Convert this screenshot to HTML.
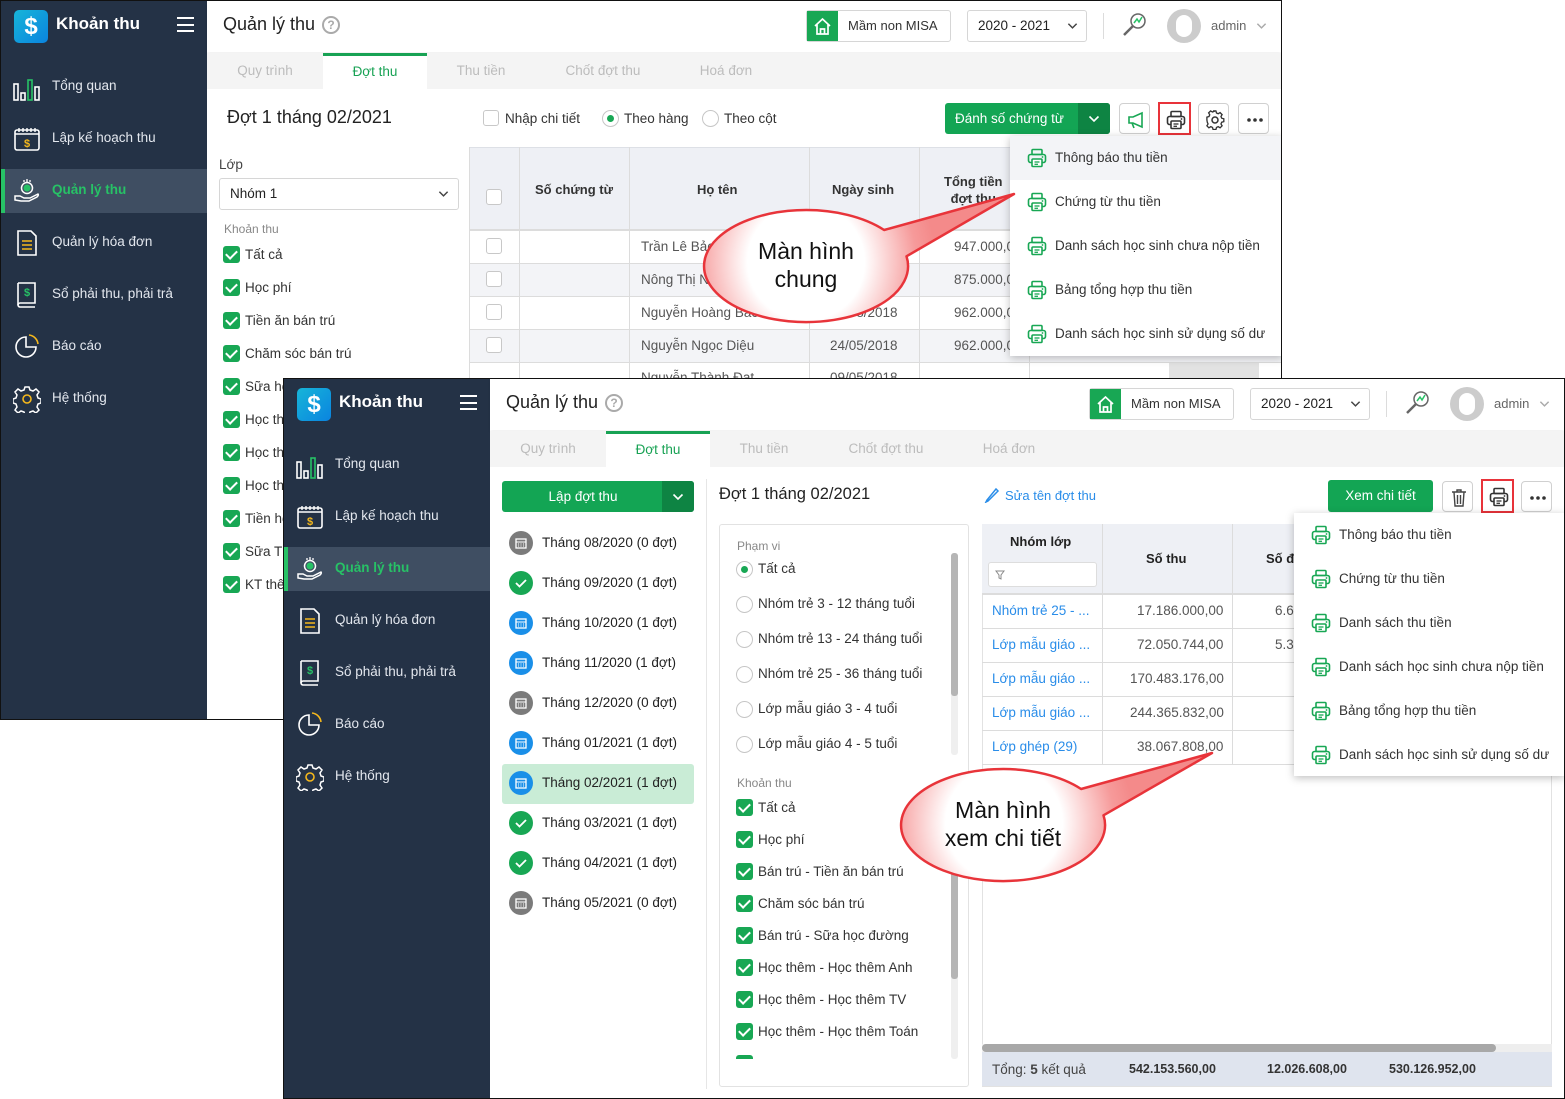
<!DOCTYPE html>
<html><head><meta charset="utf-8">
<style>
*{box-sizing:border-box;margin:0;padding:0}
body{width:1565px;height:1099px;background:#fff;position:relative;overflow:hidden;font-family:"Liberation Sans","Noto Sans CJK SC",sans-serif;font-size:13px;color:#333}
.p{position:absolute;width:1282px;border:1px solid #111;background:#fff;overflow:hidden}
.a{position:absolute;white-space:nowrap}
.sb{position:absolute;left:0;top:0;width:206px;height:100%;background:#243246}
.logo{position:absolute;left:13px;top:9px;width:34px;height:33px;border-radius:5px;background:linear-gradient(135deg,#17b5d8,#0a84e0);color:#fff;font-weight:bold;font-size:24px;text-align:center;line-height:33px}
.brand{position:absolute;left:55px;top:13px;color:#fff;font-weight:bold;font-size:17px}
.hb{position:absolute;left:176px;top:16px;width:17px;height:15px;border-top:2px solid #fff;border-bottom:2px solid #fff}
.hb:after{content:"";position:absolute;left:0;top:4.5px;width:17px;height:2px;background:#fff}
.mi{position:absolute;left:0;width:206px;height:44px;color:#e3e7ee;font-size:13.5px}
.mi span{position:absolute;left:51px;top:13px}
.mi svg{position:absolute;left:12px;top:8px}
.mi.act{background:#3f4e62;border-left:4px solid #27c266}
.mi.act span{color:#27c266;font-weight:bold;left:47px}
.mi.act svg{left:8px}
.hdr{position:absolute;left:206px;top:0;right:0;height:51px;background:#fff;box-shadow:0 1px 3px rgba(0,0,0,.08)}
.tabs{position:absolute;left:206px;top:52px;right:0;height:36px;background:#f4f4f4}
.tab{position:absolute;top:0;height:36px;line-height:36px;color:#bcbcbc;font-size:13.5px;text-align:center}
.tab.on{background:#fff;border-top:3px solid #18a254;color:#18a254;line-height:32px}
.box{position:absolute;border:1px solid #d6d6d6;border-radius:3px;background:#fff}
.cb{position:absolute;width:17px;height:17px;border-radius:3px;background:#18a754}
.cb:after{content:"";position:absolute;left:5px;top:2px;width:5px;height:9px;border:solid #fff;border-width:0 2px 2px 0;transform:rotate(45deg)}
.ecb{position:absolute;width:16px;height:16px;border:1px solid #c8c8c8;border-radius:3px;background:#fff}
.rd{position:absolute;width:17px;height:17px;border:1px solid #c6c6c6;border-radius:50%;background:#fff}
.rd.on:after{content:"";position:absolute;left:4px;top:4px;width:7px;height:7px;border-radius:50%;background:#18a754}
.gbtn{position:absolute;background:#13a554;color:#fff;border-radius:3px;font-size:13.5px;text-align:center}
.ib{position:absolute;width:31px;height:31px;border:1px solid #d0d0d0;border-radius:4px;background:#fff}
.ib svg{position:absolute;left:6px;top:6px}
.red{border:2px solid #e8333a;border-radius:0}
.dd{position:absolute;background:#fff;box-shadow:0 2px 8px rgba(0,0,0,.25)}
.dd .it{position:absolute;left:0;right:0;height:44px;font-size:13.5px;color:#333}
.dd .it svg{position:absolute;left:17px;top:12px}
.dd .it span{position:absolute;left:45px;top:14px}
.t{position:absolute;font-size:13.5px;color:#333;white-space:nowrap}
.cl{position:absolute;background:#dcdcdc}
</style></head><body>
<svg width="0" height="0" style="position:absolute">
<defs>
<symbol id="pr" viewBox="0 0 20 20"><rect x="5" y="1.5" width="10" height="5" rx="1" fill="none" stroke="currentColor" stroke-width="1.6"/><rect x="1.5" y="6.5" width="17" height="8" rx="2" fill="none" stroke="currentColor" stroke-width="1.6"/><rect x="5" y="11" width="10" height="7.5" rx="1" fill="#fff" stroke="currentColor" stroke-width="1.6"/><line x1="7.5" y1="14" x2="12.5" y2="14" stroke="currentColor" stroke-width="1.3"/><line x1="7.5" y1="16.3" x2="11" y2="16.3" stroke="currentColor" stroke-width="1.3"/><circle cx="15.5" cy="9" r="0.9" fill="currentColor"/></symbol>
<symbol id="chev" viewBox="0 0 12 8"><path d="M1.5 1.5 6 6 10.5 1.5" fill="none" stroke="currentColor" stroke-width="1.6"/></symbol>
<symbol id="i1" viewBox="0 0 28 22"><rect x="1" y="5" width="4" height="16" fill="none" stroke="#fff" stroke-width="1.6"/><rect x="8" y="14" width="4" height="7" fill="none" stroke="#fff" stroke-width="1.6"/><rect x="15" y="1" width="4" height="20" fill="none" stroke="#27c266" stroke-width="1.6"/><rect x="22" y="8" width="4" height="13" fill="none" stroke="#fff" stroke-width="1.6"/></symbol>
<symbol id="i2" viewBox="0 0 28 26"><rect x="2" y="4" width="24" height="20" rx="2" fill="none" stroke="#fff" stroke-width="1.6"/><line x1="2" y1="8" x2="26" y2="8" stroke="#fff" stroke-width="1.4"/><path d="M6 2v4M10 2v4M14 2v4M18 2v4M22 2v4" stroke="#fff" stroke-width="1.4"/><text x="14" y="21" font-size="11" text-anchor="middle" fill="#f5b81c" font-family="Liberation Sans" font-weight="bold">$</text></symbol>
<symbol id="i3" viewBox="0 0 28 28"><circle cx="14" cy="11" r="5.5" fill="none" stroke="#fff" stroke-width="1.5"/><circle cx="14" cy="11" r="3.5" fill="#27c266"/><path d="M14 2v3M11 3v2M17 3v2" stroke="#fff" stroke-width="1.3"/><path d="M2 19h5l4 2h6l8-4c1 1 0 2-1 3l-8 4H8l-6-1z" fill="none" stroke="#fff" stroke-width="1.5"/></symbol>
<symbol id="i4" viewBox="0 0 28 28"><path d="M5 2h13l5 5v19H5z" fill="none" stroke="#fff" stroke-width="1.6"/><path d="M9 12h10M9 16h10M9 20h10" stroke="#f5b81c" stroke-width="1.6"/></symbol>
<symbol id="i5" viewBox="0 0 28 28"><path d="M5 2h17v20H7c-1 0-2 1-2 2s1 2 2 2h15" fill="none" stroke="#fff" stroke-width="1.6"/><line x1="5" y1="2" x2="5" y2="24" stroke="#fff" stroke-width="1.6"/><text x="14" y="15" font-size="11" text-anchor="middle" fill="#27c266" font-family="Liberation Sans" font-weight="bold">$</text></symbol>
<symbol id="i6" viewBox="0 0 28 28"><path d="M13 4a10 10 0 1 0 10 10H13z" fill="none" stroke="#fff" stroke-width="1.6"/><path d="M16 2a10 10 0 0 1 9 9" fill="none" stroke="#f5b81c" stroke-width="1.6"/></symbol>
<symbol id="i7" viewBox="0 0 28 28"><circle cx="14" cy="14" r="4" fill="none" stroke="#f5b81c" stroke-width="1.6"/><path d="M12 2h4l1 3 3 1 3-2 3 3-2 3 1 3 3 1v4l-3 1-1 3 2 3-3 3-3-2-3 1-1 3h-4l-1-3-3-1-3 2-3-3 2-3-1-3-3-1v-4l3-1 1-3-2-3 3-3 3 2 3-1z" fill="none" stroke="#fff" stroke-width="1.5"/></symbol>
<radialGradient id="cg" gradientUnits="userSpaceOnUse" cx="110" cy="76" r="130"><stop offset="0" stop-color="#fff"/><stop offset=".45" stop-color="#fff"/><stop offset=".85" stop-color="#f69a9a"/><stop offset="1" stop-color="#f48a8a"/></radialGradient>
</defs></svg>

<!-- PANEL A -->
<div class="p" style="left:0;top:0;height:720px">
 <div class="sb">
  <div class="logo">$</div><div class="brand">Khoản thu</div><div class="hb"></div>
  <div class="mi" style="top:64px"><svg width="28" height="28"><use href="#i1" y="3"/></svg><span>Tổng quan</span></div>
  <div class="mi" style="top:116px"><svg width="28" height="28"><use href="#i2"/></svg><span>Lập kế hoạch thu</span></div>
  <div class="mi act" style="top:168px"><svg width="28" height="28"><use href="#i3"/></svg><span>Quản lý thu</span></div>
  <div class="mi" style="top:220px"><svg width="28" height="28"><use href="#i4"/></svg><span>Quản lý hóa đơn</span></div>
  <div class="mi" style="top:272px"><svg width="28" height="28"><use href="#i5"/></svg><span>Sổ phải thu, phải trả</span></div>
  <div class="mi" style="top:324px"><svg width="28" height="28"><use href="#i6"/></svg><span>Báo cáo</span></div>
  <div class="mi" style="top:376px"><svg width="28" height="28"><use href="#i7"/></svg><span>Hệ thống</span></div>
 </div>
 <div class="hdr"></div>
 <div class="a" style="left:222px;top:13px;font-size:18px;color:#222">Quản lý thu</div>
 <div class="a" style="left:321px;top:15px;width:18px;height:18px;border:2px solid #aaa;border-radius:50%;color:#aaa;font-size:12px;font-weight:bold;text-align:center;line-height:14px">?</div>
 <div class="box" style="left:805px;top:9px;width:145px;height:32px"></div>
 <div class="a" style="left:806px;top:10px;width:31px;height:30px;background:#18a754"><svg width="31" height="30"><path d="M8 15 15.5 8 23 15M10 13v10h11V13M13.5 23v-5h4v5" fill="none" stroke="#fff" stroke-width="1.7"/></svg></div>
 <div class="t" style="left:847px;top:17px;font-size:13px">Mầm non MISA</div>
 <div class="box" style="left:966px;top:9px;width:120px;height:32px"></div>
 <div class="t" style="left:977px;top:17px;color:#222">2020 - 2021</div>
 <svg class="a" style="left:1066px;top:21px;color:#444" width="11" height="8"><use href="#chev"/></svg>
 <div class="cl" style="left:1102px;top:12px;width:1px;height:26px"></div>
 <svg class="a" style="left:1118px;top:9px" width="30" height="30"><circle cx="19" cy="11" r="7" fill="none" stroke="#666" stroke-width="1.5"/><path d="M15 13l3-4 2 3 3-5" fill="none" stroke="#27c266" stroke-width="1.5"/><path d="M14 16 5 25" stroke="#666" stroke-width="2.5"/></svg>
 <div class="a" style="left:1166px;top:8px;width:34px;height:34px;border-radius:50%;background:#ccc"><div style="position:absolute;left:9px;top:6px;width:16px;height:22px;border-radius:8px;background:#fff"></div></div>
 <div class="t" style="left:1210px;top:17px;color:#666;font-size:13px">admin</div>
 <svg class="a" style="left:1255px;top:21px;color:#aaa" width="11" height="8"><use href="#chev"/></svg>
 <div class="tabs"></div>
 <div class="tab" style="left:206px;top:52px;width:116px">Quy trình</div>
 <div class="tab on" style="left:322px;top:52px;width:104px">Đợt thu</div>
 <div class="tab" style="left:426px;top:52px;width:108px">Thu tiền</div>
 <div class="tab" style="left:540px;top:52px;width:124px">Chốt đợt thu</div>
 <div class="tab" style="left:670px;top:52px;width:110px">Hoá đơn</div>

 <div class="a" style="left:226px;top:106px;font-size:18px;color:#222">Đợt 1 tháng 02/2021</div>
 <div class="ecb" style="left:482px;top:109px"></div><div class="t" style="left:504px;top:110px">Nhập chi tiết</div>
 <div class="rd on" style="left:601px;top:109px"></div><div class="t" style="left:623px;top:110px">Theo hàng</div>
 <div class="rd" style="left:701px;top:109px"></div><div class="t" style="left:723px;top:110px">Theo cột</div>
 <div class="gbtn" style="left:944px;top:102px;width:165px;height:31px;line-height:31px;text-align:left;padding-left:10px">Đánh số chứng từ</div>
 <div class="a" style="left:1077px;top:102px;width:32px;height:31px;background:#0e8443;border-radius:0 3px 3px 0"><svg style="position:absolute;left:10px;top:12px;color:#fff" width="12" height="8"><use href="#chev"/></svg></div>
 <div class="ib" style="left:1118px;top:102px"><svg width="20" height="20"><path d="M3 7h4l9-4v14l-9-4H3z M6 13l2 5" fill="none" stroke="#18a754" stroke-width="1.6"/></svg></div>
 <div class="ib red" style="left:1157px;top:101px;width:33px;height:33px"><svg width="20" height="20" style="color:#333"><use href="#pr"/></svg></div>
 <div class="ib" style="left:1197px;top:102px"><svg width="20" height="20"><circle cx="10" cy="10" r="3" fill="none" stroke="#333" stroke-width="1.5"/><path d="M8.5 2h3l.6 2.2 1.8.8 2-1.2 2.1 2.1-1.2 2 .8 1.8 2.2.6v3l-2.2.6-.8 1.8 1.2 2-2.1 2.1-2-1.2-1.8.8-.6 2.2h-3l-.6-2.2-1.8-.8-2 1.2-2.1-2.1 1.2-2-.8-1.8L2 11.5v-3l2.2-.6.8-1.8-1.2-2L5.9 2l2 1.2 1.8-.8z" fill="none" stroke="#333" stroke-width="1.4" transform="translate(0 -1) scale(.95)"/></svg></div>
 <div class="ib" style="left:1237px;top:102px"><svg width="20" height="20"><circle cx="4" cy="10" r="1.8" fill="#333"/><circle cx="10" cy="10" r="1.8" fill="#333"/><circle cx="16" cy="10" r="1.8" fill="#333"/></svg></div>

 <div class="t" style="left:218px;top:156px;color:#444">Lớp</div>
 <div class="box" style="left:218px;top:177px;width:240px;height:32px"></div>
 <div class="t" style="left:229px;top:185px;color:#222">Nhóm 1</div>
 <svg class="a" style="left:437px;top:189px;color:#444" width="11" height="8"><use href="#chev"/></svg>
 <div class="t" style="left:223px;top:221px;font-size:12px;color:#888">Khoản thu</div>
 <div class="cb" style="left:222px;top:245px"></div><div class="t" style="left:244px;top:246px">Tất cả</div>
 <div class="cb" style="left:222px;top:278px"></div><div class="t" style="left:244px;top:279px">Học phí</div>
 <div class="cb" style="left:222px;top:311px"></div><div class="t" style="left:244px;top:312px">Tiền ăn bán trú</div>
 <div class="cb" style="left:222px;top:344px"></div><div class="t" style="left:244px;top:345px">Chăm sóc bán trú</div>
 <div class="cb" style="left:222px;top:377px"></div><div class="t" style="left:244px;top:378px">Sữa học đường</div>
 <div class="cb" style="left:222px;top:410px"></div><div class="t" style="left:244px;top:411px">Học thêm</div>
 <div class="cb" style="left:222px;top:443px"></div><div class="t" style="left:244px;top:444px">Học thêm</div>
 <div class="cb" style="left:222px;top:476px"></div><div class="t" style="left:244px;top:477px">Học thêm</div>
 <div class="cb" style="left:222px;top:509px"></div><div class="t" style="left:244px;top:510px">Tiền học</div>
 <div class="cb" style="left:222px;top:542px"></div><div class="t" style="left:244px;top:543px">Sữa TH</div>
 <div class="cb" style="left:222px;top:575px"></div><div class="t" style="left:244px;top:576px">KT thêm</div>

 <!-- table -->
 <div class="a" style="left:468px;top:146px;width:814px;height:83px;background:#eef0f5;border:1px solid #dde0e6"></div>
 <div class="a" style="left:468px;top:262px;width:814px;height:33px;background:#f3f4f7"></div>
 <div class="a" style="left:468px;top:328px;width:814px;height:33px;background:#f3f4f7"></div>
 <div class="a" style="left:1168px;top:361px;width:90px;height:17px;background:#e2e2e2"></div>
 <div class="cl" style="left:468px;top:146px;width:1px;height:240px"></div>
 <div class="cl" style="left:518px;top:146px;width:1px;height:240px"></div>
 <div class="cl" style="left:628px;top:146px;width:1px;height:240px"></div>
 <div class="cl" style="left:808px;top:146px;width:1px;height:240px"></div>
 <div class="cl" style="left:918px;top:146px;width:1px;height:240px"></div>
 <div class="cl" style="left:1028px;top:146px;width:1px;height:240px"></div>
 <div class="cl" style="left:468px;top:228px;width:814px;height:2px"></div>
 <div class="cl" style="left:468px;top:262px;width:814px;height:1px"></div>
 <div class="cl" style="left:468px;top:295px;width:814px;height:1px"></div>
 <div class="cl" style="left:468px;top:328px;width:814px;height:1px"></div>
 <div class="cl" style="left:468px;top:361px;width:814px;height:1px"></div>
 <div class="ecb" style="left:485px;top:188px"></div>
 <div class="t" style="left:534px;top:181px;font-weight:bold;font-size:13px">Số chứng từ</div>
 <div class="t" style="left:696px;top:181px;font-weight:bold;font-size:13px">Họ tên</div>
 <div class="t" style="left:831px;top:181px;font-weight:bold;font-size:13px">Ngày sinh</div>
 <div class="t" style="left:943px;top:172px;font-weight:bold;font-size:13px;text-align:center;line-height:17px">Tổng tiền<br>đợt thu</div>
 <div class="ecb" style="left:485px;top:237px"></div><div class="t" style="left:640px;top:238px;color:#555">Trần Lê Bảo</div><div class="t" style="left:953px;top:238px;color:#555">947.000,00</div>
 <div class="ecb" style="left:485px;top:270px"></div><div class="t" style="left:640px;top:271px;color:#555">Nông Thị Ngọc</div><div class="t" style="left:953px;top:271px;color:#555">875.000,00</div>
 <div class="ecb" style="left:485px;top:303px"></div><div class="t" style="left:640px;top:304px;color:#555">Nguyễn Hoàng Bách</div><div class="t" style="left:829px;top:304px;color:#555">08/08/2018</div><div class="t" style="left:953px;top:304px;color:#555">962.000,00</div>
 <div class="ecb" style="left:485px;top:336px"></div><div class="t" style="left:640px;top:337px;color:#555">Nguyễn Ngọc Diệu</div><div class="t" style="left:829px;top:337px;color:#555">24/05/2018</div><div class="t" style="left:953px;top:337px;color:#555">962.000,00</div>
 <div class="t" style="left:640px;top:369px;color:#555">Nguyễn Thành Đạt</div><div class="t" style="left:829px;top:369px;color:#555">09/05/2018</div>

 <div class="dd" style="left:1009px;top:135px;width:273px;height:220px">
  <div class="it" style="top:0;background:#f3f4f7"><svg width="20" height="20" style="color:#18a754"><use href="#pr"/></svg><span>Thông báo thu tiền</span></div>
  <div class="it" style="top:44px"><svg width="20" height="20" style="color:#18a754"><use href="#pr"/></svg><span>Chứng từ thu tiền</span></div>
  <div class="it" style="top:88px"><svg width="20" height="20" style="color:#18a754"><use href="#pr"/></svg><span>Danh sách học sinh chưa nộp tiền</span></div>
  <div class="it" style="top:132px"><svg width="20" height="20" style="color:#18a754"><use href="#pr"/></svg><span>Bảng tổng hợp thu tiền</span></div>
  <div class="it" style="top:176px"><svg width="20" height="20" style="color:#18a754"><use href="#pr"/></svg><span>Danh sách học sinh sử dụng số dư</span></div>
 </div>
 <svg class="a" style="left:695px;top:185px" width="330" height="145">
  <path d="M210.5 70.3 A102 56 0 1 1 188.1 44 L318 8 Z" fill="url(#cg)" stroke="#e8343a" stroke-width="2.5" stroke-linejoin="round"/>
  <text x="110" y="73" font-size="23" text-anchor="middle" fill="#111" font-family="Liberation Sans">Màn hình</text>
  <text x="110" y="101" font-size="23" text-anchor="middle" fill="#111" font-family="Liberation Sans">chung</text>
 </svg>
</div>

<!-- PANEL B -->
<div class="p" style="left:283px;top:378px;height:721px">
 <div class="sb">
  <div class="logo">$</div><div class="brand">Khoản thu</div><div class="hb"></div>
  <div class="mi" style="top:64px"><svg width="28" height="28"><use href="#i1" y="3"/></svg><span>Tổng quan</span></div>
  <div class="mi" style="top:116px"><svg width="28" height="28"><use href="#i2"/></svg><span>Lập kế hoạch thu</span></div>
  <div class="mi act" style="top:168px"><svg width="28" height="28"><use href="#i3"/></svg><span>Quản lý thu</span></div>
  <div class="mi" style="top:220px"><svg width="28" height="28"><use href="#i4"/></svg><span>Quản lý hóa đơn</span></div>
  <div class="mi" style="top:272px"><svg width="28" height="28"><use href="#i5"/></svg><span>Sổ phải thu, phải trả</span></div>
  <div class="mi" style="top:324px"><svg width="28" height="28"><use href="#i6"/></svg><span>Báo cáo</span></div>
  <div class="mi" style="top:376px"><svg width="28" height="28"><use href="#i7"/></svg><span>Hệ thống</span></div>
 </div>
 <div class="hdr"></div>
 <div class="a" style="left:222px;top:13px;font-size:18px;color:#222">Quản lý thu</div>
 <div class="a" style="left:321px;top:15px;width:18px;height:18px;border:2px solid #aaa;border-radius:50%;color:#aaa;font-size:12px;font-weight:bold;text-align:center;line-height:14px">?</div>
 <div class="box" style="left:805px;top:9px;width:145px;height:32px"></div>
 <div class="a" style="left:806px;top:10px;width:31px;height:30px;background:#18a754"><svg width="31" height="30"><path d="M8 15 15.5 8 23 15M10 13v10h11V13M13.5 23v-5h4v5" fill="none" stroke="#fff" stroke-width="1.7"/></svg></div>
 <div class="t" style="left:847px;top:17px;font-size:13px">Mầm non MISA</div>
 <div class="box" style="left:966px;top:9px;width:120px;height:32px"></div>
 <div class="t" style="left:977px;top:17px;color:#222">2020 - 2021</div>
 <svg class="a" style="left:1066px;top:21px;color:#444" width="11" height="8"><use href="#chev"/></svg>
 <div class="cl" style="left:1102px;top:12px;width:1px;height:26px"></div>
 <svg class="a" style="left:1118px;top:9px" width="30" height="30"><circle cx="19" cy="11" r="7" fill="none" stroke="#666" stroke-width="1.5"/><path d="M15 13l3-4 2 3 3-5" fill="none" stroke="#27c266" stroke-width="1.5"/><path d="M14 16 5 25" stroke="#666" stroke-width="2.5"/></svg>
 <div class="a" style="left:1166px;top:8px;width:34px;height:34px;border-radius:50%;background:#ccc"><div style="position:absolute;left:9px;top:6px;width:16px;height:22px;border-radius:8px;background:#fff"></div></div>
 <div class="t" style="left:1210px;top:17px;color:#666;font-size:13px">admin</div>
 <svg class="a" style="left:1255px;top:21px;color:#aaa" width="11" height="8"><use href="#chev"/></svg>
 <div class="tabs"></div>
 <div class="tab" style="left:206px;top:52px;width:116px">Quy trình</div>
 <div class="tab on" style="left:322px;top:52px;width:104px">Đợt thu</div>
 <div class="tab" style="left:426px;top:52px;width:108px">Thu tiền</div>
 <div class="tab" style="left:540px;top:52px;width:124px">Chốt đợt thu</div>
 <div class="tab" style="left:670px;top:52px;width:110px">Hoá đơn</div>

 <!-- left list -->
 <div class="gbtn" style="left:218px;top:102px;width:192px;height:31px;line-height:31px;padding-right:30px">Lập đợt thu</div>
 <div class="a" style="left:378px;top:102px;width:32px;height:31px;background:#0e8443;border-radius:0 3px 3px 0"><svg style="position:absolute;left:10px;top:12px;color:#fff" width="12" height="8"><use href="#chev"/></svg></div>
 <div class="a" style="left:218px;top:385px;width:192px;height:40px;background:#c9ecd6;border-radius:3px"></div>
 <div class="cl" style="left:422px;top:100px;width:1px;height:610px;background:#e6e6e6"></div>
 <div id="months"></div>

 <div class="a" style="left:435px;top:106px;font-size:16.5px;color:#222">Đợt 1 tháng 02/2021</div>
 <svg class="a" style="left:700px;top:108px" width="16" height="16"><path d="M3 13 2 15 4 14 14 4 12 2Z" fill="none" stroke="#2a8de9" stroke-width="1.5"/></svg>
 <div class="t" style="left:721px;top:109px;color:#2a8de9;font-size:13px">Sửa tên đợt thu</div>
 <div class="gbtn" style="left:1044px;top:101px;width:105px;height:32px;line-height:32px">Xem chi tiết</div>
 <div class="ib" style="left:1158px;top:102px"><svg width="20" height="20"><path d="M3 4h14M8 4V2h4v2M5 4l1 14h8l1-14M8.5 7v9M11.5 7v9" fill="none" stroke="#444" stroke-width="1.4"/></svg></div>
 <div class="ib red" style="left:1197px;top:100px;width:33px;height:34px"><svg width="20" height="20" style="color:#333"><use href="#pr"/></svg></div>
 <div class="ib" style="left:1237px;top:102px"><svg width="20" height="20"><circle cx="4" cy="10" r="1.8" fill="#333"/><circle cx="10" cy="10" r="1.8" fill="#333"/><circle cx="16" cy="10" r="1.8" fill="#333"/></svg></div>

 <!-- filter panel -->
 <div class="box" style="left:435px;top:145px;width:250px;height:563px;border-color:#e2e2e2"></div>
 <div class="t" style="left:453px;top:160px;font-size:12px;color:#888">Phạm vi</div>
 <div class="rd on" style="left:452px;top:182px"></div><div class="t" style="left:474px;top:182px">Tất cả</div>
 <div class="rd" style="left:452px;top:217px"></div><div class="t" style="left:474px;top:217px">Nhóm trẻ 3 - 12 tháng tuổi</div>
 <div class="rd" style="left:452px;top:252px"></div><div class="t" style="left:474px;top:252px">Nhóm trẻ 13 - 24 tháng tuổi</div>
 <div class="rd" style="left:452px;top:287px"></div><div class="t" style="left:474px;top:287px">Nhóm trẻ 25 - 36 tháng tuổi</div>
 <div class="rd" style="left:452px;top:322px"></div><div class="t" style="left:474px;top:322px">Lớp mẫu giáo 3 - 4 tuổi</div>
 <div class="rd" style="left:452px;top:357px"></div><div class="t" style="left:474px;top:357px">Lớp mẫu giáo 4 - 5 tuổi</div>
 <div class="a" style="left:667px;top:174px;width:7px;height:202px;background:#efefef;border-radius:3px"><div style="height:143px;background:#b5b5b5;border-radius:3px"></div></div>
 <div class="t" style="left:453px;top:397px;font-size:12px;color:#888">Khoản thu</div>
 <div class="a" style="left:667px;top:420px;width:7px;height:260px;background:#efefef;border-radius:3px"><div style="margin-top:70px;height:110px;background:#b5b5b5;border-radius:3px"></div></div>
 <div id="kt"></div>

 <!-- table -->
 <div class="a" style="left:698px;top:145px;width:570px;height:563px;border:1px solid #e2e2e2"></div>
 <div class="a" style="left:698px;top:145px;width:570px;height:70px;background:#eef0f5"></div>
 <div class="a" style="left:704px;top:183px;width:109px;height:25px;background:#fff;border:1px solid #ddd;border-radius:3px"><svg style="position:absolute;left:6px;top:7px" width="10" height="10"><path d="M1 1h8L6 5v4L4 8V5z" fill="none" stroke="#888" stroke-width="1"/></svg></div>
 <div class="t" style="left:726px;top:155px;font-weight:bold;font-size:13px;color:#222">Nhóm lớp</div>
 <div class="t" style="left:862px;top:172px;font-weight:bold;font-size:13px;color:#222">Số thu</div>
 <div class="t" style="left:982px;top:172px;font-weight:bold;font-size:13px;color:#222">Số đ</div>
 <div class="cl" style="left:818px;top:145px;width:1px;height:241px"></div>
 <div class="cl" style="left:948px;top:145px;width:1px;height:241px"></div>
 <div class="cl" style="left:698px;top:214px;width:570px;height:2px"></div>
 <div class="cl" style="left:698px;top:249px;width:570px;height:1px"></div>
 <div class="cl" style="left:698px;top:283px;width:570px;height:1px"></div>
 <div class="cl" style="left:698px;top:317px;width:570px;height:1px"></div>
 <div class="cl" style="left:698px;top:351px;width:570px;height:1px"></div>
 <div class="cl" style="left:698px;top:385px;width:570px;height:1px"></div>
 <div class="t" style="left:708px;top:224px;color:#2a8de9">Nhóm trẻ 25 - ...</div><div class="t" style="left:853px;top:224px;color:#555">17.186.000,00</div><div class="t" style="left:991px;top:224px;color:#555">6.6</div>
 <div class="t" style="left:708px;top:258px;color:#2a8de9">Lớp mẫu giáo ...</div><div class="t" style="left:853px;top:258px;color:#555">72.050.744,00</div><div class="t" style="left:991px;top:258px;color:#555">5.3</div>
 <div class="t" style="left:708px;top:292px;color:#2a8de9">Lớp mẫu giáo ...</div><div class="t" style="left:846px;top:292px;color:#555">170.483.176,00</div>
 <div class="t" style="left:708px;top:326px;color:#2a8de9">Lớp mẫu giáo ...</div><div class="t" style="left:846px;top:326px;color:#555">244.365.832,00</div>
 <div class="t" style="left:708px;top:360px;color:#2a8de9">Lớp ghép (29)</div><div class="t" style="left:853px;top:360px;color:#555">38.067.808,00</div>
 <div class="a" style="left:698px;top:665px;width:570px;height:9px;background:#eee"><div style="width:514px;height:8px;background:#a8a8a8;border-radius:4px"></div></div>
 <div class="a" style="left:698px;top:673px;width:570px;height:34px;background:#dfe4ee"></div>
 <div class="t" style="left:708px;top:683px;color:#444">Tổng: <b>5</b> kết quả</div>
 <div class="t" style="left:845px;top:683px;font-weight:bold;font-size:12.5px;color:#333">542.153.560,00</div>
 <div class="t" style="left:983px;top:683px;font-weight:bold;font-size:12.5px;color:#333">12.026.608,00</div>
 <div class="t" style="left:1105px;top:683px;font-weight:bold;font-size:12.5px;color:#333">530.126.952,00</div>

 <div class="dd" style="left:1010px;top:134px;width:271px;height:263px">
  <div class="it" style="top:0"><svg width="20" height="20" style="color:#18a754"><use href="#pr"/></svg><span>Thông báo thu tiền</span></div>
  <div class="it" style="top:44px"><svg width="20" height="20" style="color:#18a754"><use href="#pr"/></svg><span>Chứng từ thu tiền</span></div>
  <div class="it" style="top:88px"><svg width="20" height="20" style="color:#18a754"><use href="#pr"/></svg><span>Danh sách thu tiền</span></div>
  <div class="it" style="top:132px"><svg width="20" height="20" style="color:#18a754"><use href="#pr"/></svg><span>Danh sách học sinh chưa nộp tiền</span></div>
  <div class="it" style="top:176px"><svg width="20" height="20" style="color:#18a754"><use href="#pr"/></svg><span>Bảng tổng hợp thu tiền</span></div>
  <div class="it" style="top:220px"><svg width="20" height="20" style="color:#18a754"><use href="#pr"/></svg><span>Danh sách học sinh sử dụng số dư</span></div>
 </div>
 <svg class="a" style="left:610px;top:368px" width="330" height="145">
  <path d="M209.5 68.3 A102 56 0 1 1 187.1 42 L318 6 Z" fill="url(#cg)" stroke="#e8343a" stroke-width="2.5" stroke-linejoin="round"/>
  <text x="109" y="71" font-size="23" text-anchor="middle" fill="#111" font-family="Liberation Sans">Màn hình</text>
  <text x="109" y="99" font-size="23" text-anchor="middle" fill="#111" font-family="Liberation Sans">xem chi tiết</text>
 </svg>
</div>
<script>
(function(){
var m=[["08/2020","0","g"],["09/2020","1","ok"],["10/2020","1","b"],["11/2020","1","b"],["12/2020","0","g"],["01/2021","1","b"],["02/2021","1","b"],["03/2021","1","ok"],["04/2021","1","ok"],["05/2021","0","g"]];
var h="";m.forEach(function(x,i){var y=152+i*40;var c=x[2]=="g"?"#7b7b7b":x[2]=="b"?"#1a8fe8":"#18a754";
var ic=x[2]=="ok"?'<path d="M7 12l3.5 3.5L17 9" fill="none" stroke="#fff" stroke-width="1.8"/>':'<rect x="7" y="8" width="10" height="9" fill="none" stroke="#fff" stroke-width="1.3"/><path d="M7 11h10M9 13h1M11.5 13h1M14 13h1M9 15h1M11.5 15h1M14 15h1" stroke="#fff" stroke-width="1"/>';
h+='<svg class="a" style="left:225px;top:'+y+'px" width="24" height="24"><circle cx="12" cy="12" r="12" fill="'+c+'"/>'+ic+'</svg><div class="t" style="left:258px;top:'+(y+4)+'px;color:#222">Tháng '+x[0]+' ('+x[1]+' đợt)</div>';});
document.getElementById("months").outerHTML=h;
var k=["Tất cả","Học phí","Bán trú - Tiền ăn bán trú","Chăm sóc bán trú","Bán trú - Sữa học đường","Học thêm - Học thêm Anh","Học thêm - Học thêm TV","Học thêm - Học thêm Toán"];
h="";k.forEach(function(s,i){var y=420+i*32;h+='<div class="cb" style="left:452px;top:'+y+'px"></div><div class="t" style="left:474px;top:'+(y+1)+'px">'+s+'</div>';});
h+='<div class="cb" style="left:452px;top:676px;height:4px;border-radius:3px 3px 0 0"></div>';
document.getElementById("kt").outerHTML=h;
})();
</script>
</body></html>
